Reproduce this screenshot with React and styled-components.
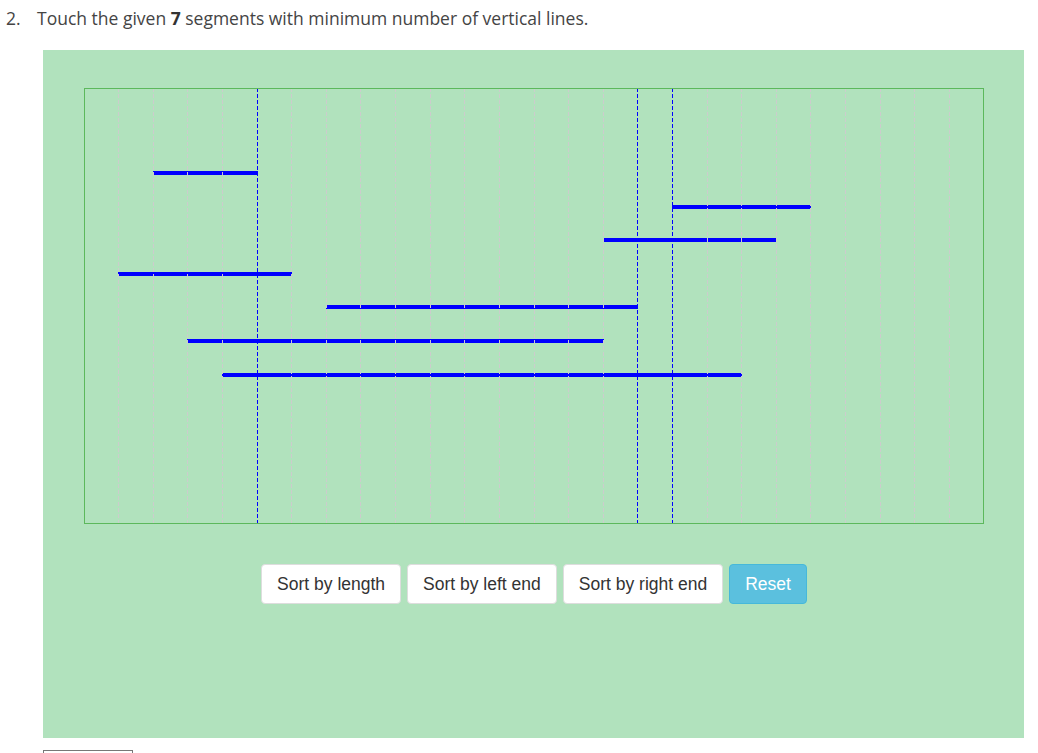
import React from 'react';
import styled, { createGlobalStyle } from 'styled-components';

const GlobalStyle = createGlobalStyle`
  body {
    margin: 0;
    background: #fff;
    font-family: "Open Sans", "Noto Sans", sans-serif;
  }
`;

const Page = styled.div`
  width: 1038px;
`;

const Question = styled.div`
  display: flex;
  align-items: baseline;
  padding: 5px 0 0 6px;
  height: 50px;
  box-sizing: border-box;
  font-size: 17.5px;
  line-height: 26px;
  color: #444;

  .num {
    width: 31px;
  }

  b {
    font-weight: 700;
    color: #333;
  }
`;

const Panel = styled.div`
  margin-left: 43px;
  width: 981px;
  height: 688px;
  box-sizing: border-box;
  padding: 38px 40px 0 41px;
  background: #b1e2bd;
`;

const Board = styled.svg`
  display: block;
  width: 900px;
  height: 436px;
`;

const Toolbar = styled.div`
  display: flex;
  justify-content: center;
  gap: 6px;
  margin-top: 40px;
`;

const Button = styled.button`
  height: 40px;
  padding: 0 15px;
  border-radius: 4px;
  border: 1px solid ${p => (p.$info ? '#46b8da' : '#ddd')};
  background: ${p => (p.$info ? '#5bc0de' : '#fff')};
  color: ${p => (p.$info ? '#fff' : '#333')};
  font-family: "Liberation Sans", Arial, sans-serif;
  font-size: 17.5px;
  cursor: pointer;
`;

const CheckBox = styled.div`
  margin: 12px 0 0 43px;
  width: 88px;
  height: 30px;
  border: 1px solid #777;
  background: #fff;
`;

const W = 900;
const H = 436;
const STEP = W / 26;
const gx = k => Math.floor(k * STEP) + 0.5;
const gy = i => Math.round(85 + i * 33.6);

const segments = [
  [2, 5],
  [17, 21],
  [15, 20],
  [1, 6],
  [7, 16],
  [3, 15],
  [4, 19],
];

const picked = [5, 16, 17];

const App = () => {
  const grid = [];
  for (let k = 1; k < 26; k++) grid.push(k);

  return (
    <Page>
      <GlobalStyle />
      <Question>
        <span className="num">2.</span>
        <span>
          Touch the given <b>7</b> segments with minimum number of vertical lines.
        </span>
      </Question>
      <Panel>
        <Board viewBox={`0 0 ${W} ${H}`}>
          {segments.map(([a, b], i) => (
            <line
              key={i}
              x1={gx(a) - 0.5}
              x2={gx(b) + 0.5}
              y1={gy(i)}
              y2={gy(i)}
              stroke="#0000ff"
              strokeWidth="4"
              shapeRendering="crispEdges"
            />
          ))}
          {grid
            .filter(k => !picked.includes(k))
            .map(k => (
              <line
                key={k}
                x1={gx(k)}
                x2={gx(k)}
                y1="0"
                y2={H}
                stroke="#cccccc"
                strokeWidth="1"
                strokeDasharray="4 2"
                shapeRendering="crispEdges"
              />
            ))}
          {picked.map(k => (
            <line
              key={k}
              x1={gx(k)}
              x2={gx(k)}
              y1="0"
              y2={H}
              stroke="#0000ff"
              strokeWidth="1"
              strokeDasharray="4 2"
              shapeRendering="crispEdges"
            />
          ))}
          <rect
            x="0.5"
            y="0.5"
            width={W - 1}
            height={H - 1}
            fill="none"
            stroke="#5cb85c"
            strokeWidth="1"
            shapeRendering="crispEdges"
          />
        </Board>
        <Toolbar>
          <Button>Sort by length</Button>
          <Button>Sort by left end</Button>
          <Button>Sort by right end</Button>
          <Button $info>Reset</Button>
        </Toolbar>
      </Panel>
      <CheckBox />
    </Page>
  );
};

export default App;
